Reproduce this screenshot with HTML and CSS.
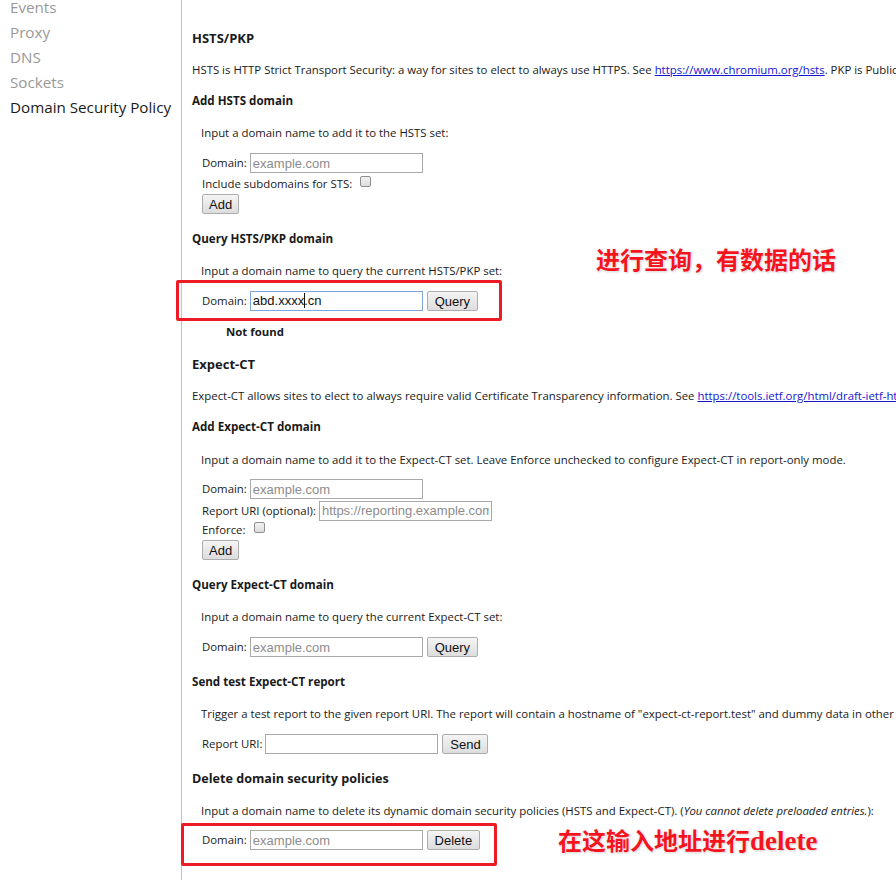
FILE: index.html
```html
<!DOCTYPE html>
<html lang="en">
<head>
  <meta charset="UTF-8">
  <title>net-internals</title>
  <link rel="stylesheet" href="styles.css">
</head>
<body>
  <div class="sidebar">
    <ul class="tabs">
      <li>Events</li>
      <li>Proxy</li>
      <li>DNS</li>
      <li>Sockets</li>
      <li class="selected">Domain Security Policy</li>
    </ul>
  </div>
  <div class="main">
    <div class="content">
      <h2 class="title">HSTS/PKP</h2>
      <p class="intro">HSTS is HTTP Strict Transport Security: a way for sites to elect to always use HTTPS. See <a href="#">https://www.chromium.org/hsts</a>. PKP is Public Key Pinning: this allows sites to pin themselves to particular keys.</p>

      <h4 class="sub">Add HSTS domain</h4>
      <p class="hint">Input a domain name to add it to the HSTS set:</p>
      <div class="row first"><label>Domain:</label><input type="text" placeholder="example.com"></div>
      <div class="row check"><label>Include subdomains for STS:</label><span class="box"></span></div>
      <div class="row"><button>Add</button></div>

      <h4 class="sub after-form">Query HSTS/PKP domain</h4>
      <p class="hint">Input a domain name to query the current HSTS/PKP set:</p>
      <div class="row first"><label>Domain:</label><div class="field focused">abd.xxxx<span class="caret"></span>.cn</div><button class="query">Query</button></div>
      <p class="result">Not found</p>

      <h2 class="title tight">Expect-CT</h2>
      <p class="intro">Expect-CT allows sites to elect to always require valid Certificate Transparency information. See <a href="#">https://tools.ietf.org/html/draft-ietf-httpbis-expect-ct</a>.</p>

      <h4 class="sub">Add Expect-CT domain</h4>
      <p class="hint low">Input a domain name to add it to the Expect-CT set. Leave Enforce unchecked to configure Expect-CT in report-only mode.</p>
      <div class="row first up"><label>Domain:</label><input type="text" placeholder="example.com"></div>
      <div class="row second"><label>Report URI (optional):</label><input type="text" class="uri" placeholder="https://reporting.example.com"></div>
      <div class="row check"><label>Enforce:</label><span class="box"></span></div>
      <div class="row"><button>Add</button></div>

      <h4 class="sub after-form">Query Expect-CT domain</h4>
      <p class="hint">Input a domain name to query the current Expect-CT set:</p>
      <div class="row first"><label>Domain:</label><input type="text" placeholder="example.com"><button class="query">Query</button></div>

      <h4 class="sub after-form">Send test Expect-CT report</h4>
      <p class="hint">Trigger a test report to the given report URI. The report will contain a hostname of "expect-ct-report.test" and dummy data in other fields.</p>
      <div class="row first"><label>Report URI:</label><input type="text"><button class="send">Send</button></div>

      <h3 class="sub big after-form">Delete domain security policies</h3>
      <p class="hint">Input a domain name to delete its dynamic domain security policies (HSTS and Expect-CT). (<i>You cannot delete preloaded entries.</i>):</p>
      <div class="row first up"><label>Domain:</label><input type="text" placeholder="example.com"><button class="delete">Delete</button></div>
    </div>

    <!-- annotations drawn over the screenshot -->
    <div class="mark mark-query"></div>
    <div class="note note-query">进行查询，有数据的话</div>
    <div class="mark mark-delete"></div>
    <div class="note note-delete">在这输入地址进行<span class="latin">delete</span></div>
  </div>
</body>
</html>
```

FILE: styles.css
```css
html, body {
  margin: 0;
  height: 880px;
  overflow: hidden;
}
body {
  display: flex;
  background: white;
  color: #1a1a1a;
  font-family: "Open Sans", "Noto Sans", sans-serif;
  font-size: 11.4px;
}
.sidebar {
  width: 181px;
  flex: none;
  border-right: 1px solid #c3c3c3;
}
.tabs {
  list-style: none;
  margin: -5px 0 0 0;
  padding: 0 0 0 10px;
}
.tabs li {
  height: 25px;
  line-height: 25px;
  font-size: 15.2px;
  color: #999;
  white-space: nowrap;
}
.tabs li.selected {
  color: #1a1a1a;
}
.main {
  position: relative;
  flex: 1;
  min-width: 0;
}
.content {
  padding-left: 10px;
  white-space: nowrap;
  overflow: hidden;
}
.title {
  margin: 28px 0 0 0;
  font-size: 13px;
  line-height: 20px;
  font-weight: bold;
}
.title.tight {
  margin-top: 12px;
}
.intro {
  margin: 12px 0 0 0;
  line-height: 20px;
}
a {
  color: #1515d0;
}
.sub {
  margin: 11px 0 0 0;
  font-size: 11.6px;
  line-height: 20px;
  font-weight: bold;
}
.sub.big {
  font-size: 12.6px;
  margin-top: 14px;
}
.sub.after-form {
  margin-top: 15px;
}
.hint {
  margin: 12px 0 0 9px;
  line-height: 20px;
}
.hint.low {
  margin-top: 13px;
}
.row {
  display: flex;
  align-items: center;
  gap: 3px;
  margin-left: 10px;
  height: 20px;
}
.row.first {
  margin-top: 10px;
}
.row.first.up {
  margin-top: 9px;
}
.row.second {
  margin-top: 2px;
  height: 19px;
}
.row.check {
  margin-top: 1px;
}
.row.second + .row.check {
  margin-top: 0;
}
.row label {
  line-height: 20px;
}
input, .field {
  box-sizing: border-box;
  width: 173px;
  height: 20px;
  margin: 0;
  padding: 0 2px;
  border: 1px solid #a9a9a9;
  font-family: "Liberation Sans", Arial, sans-serif;
  font-size: 13px;
  color: #111;
}
.field {
  line-height: 18px;
}
input::placeholder {
  color: #8c8c8c;
}
.field.focused {
  border-color: #7ea6de;
}
.caret {
  display: inline-block;
  width: 1px;
  height: 15px;
  margin: 0 -1px 0 0;
  vertical-align: -3px;
  background: #111;
}
.box {
  width: 11px;
  height: 11px;
  margin: -6px 0 0 5px;
  box-sizing: border-box;
  border: 1px solid #8f8f8f;
  border-radius: 2px;
  background: linear-gradient(#f3f3f3, #dcdcdc);
}
button {
  box-sizing: border-box;
  height: 20px;
  padding: 0 6px;
  margin: 0;
  border: 1px solid #adadad;
  border-radius: 2px;
  background: linear-gradient(#f4f4f4, #dddddd);
  font-family: "Liberation Sans", Arial, sans-serif;
  font-size: 13px;
  color: #111;
}
.query {
  margin-left: 1px;
  width: 51px;
}
.send {
  margin-left: 1px;
  width: 46px;
}
.delete {
  margin-left: 1px;
  width: 53px;
}
.result {
  margin: 11px 0 0 34px;
  line-height: 20px;
  font-weight: bold;
}
.mark {
  position: absolute;
  border: 3px solid #ed1c24;
  border-radius: 2px;
  box-sizing: border-box;
}
.mark-query {
  left: -6px;
  top: 280px;
  width: 326px;
  height: 41px;
}
.mark-delete {
  left: -1px;
  top: 823px;
  width: 316px;
  height: 43px;
}
.note {
  position: absolute;
  font-family: "Noto Sans CJK SC", sans-serif;
  font-weight: bold;
  font-size: 24px;
  line-height: 28px;
  color: #f5141e;
  white-space: nowrap;
  text-shadow: 0 0 2px #fff, 0 0 3px #ddd, 1px 1px 2px #ccc;
}
.note-query {
  left: 414px;
  top: 245px;
}
.note-delete {
  left: 376px;
  top: 826px;
}
.latin {
  font-family: "Liberation Serif", serif;
  font-size: 27px;
}
```
